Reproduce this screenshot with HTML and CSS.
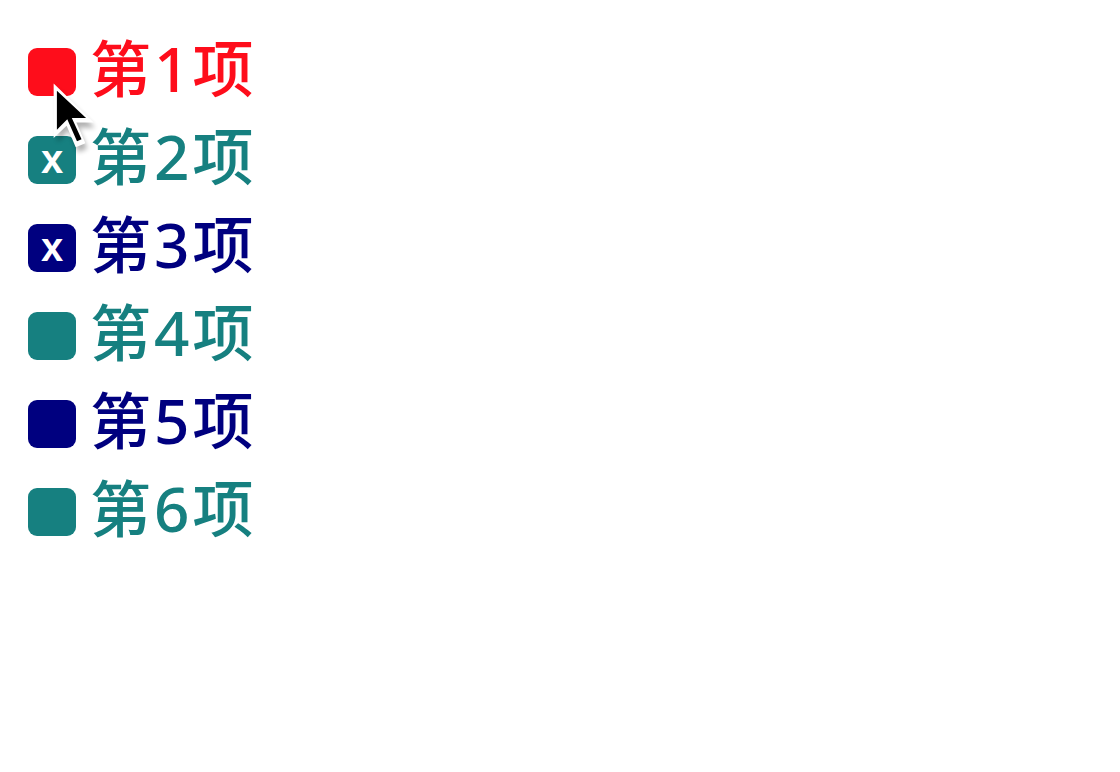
FILE: index.html
```html
<!DOCTYPE html>
<html>
<head>
<meta charset="utf-8">
<link rel="stylesheet" href="styles.css">
</head>
<body>
<ul class="list">
  <li class="item red"><span class="box"></span><span class="label">第<span class="num">1</span>项</span></li>
  <li class="item teal"><span class="box"><span class="mark">x</span></span><span class="label">第<span class="num">2</span>项</span></li>
  <li class="item navy"><span class="box"><span class="mark">x</span></span><span class="label">第<span class="num">3</span>项</span></li>
  <li class="item teal"><span class="box"></span><span class="label">第<span class="num">4</span>项</span></li>
  <li class="item navy"><span class="box"></span><span class="label">第<span class="num">5</span>项</span></li>
  <li class="item teal"><span class="box"></span><span class="label">第<span class="num">6</span>项</span></li>
</ul>
<svg class="cursor" width="52" height="83" viewBox="0 0 40 64">
  <defs>
    <filter id="sh" x="-50%" y="-50%" width="200%" height="200%">
      <feGaussianBlur stdDeviation="2"/>
    </filter>
  </defs>
  <path d="M3 4 L3 44 L12 35 L19 52 L26 49 L19 33 L32 33 Z" fill="#000" opacity="0.3" filter="url(#sh)" transform="translate(2,3)"/>
  <path d="M2 2 L2 44 L12 34.5 L19 51 L26.5 48 L19.5 32 L33 32 Z" fill="#fff"/>
  <path d="M4.5 7.5 L4.5 37.5 L12.5 29.5 L20 46.5 L23.5 45 L16 28.5 L27 28.5 Z" fill="#000"/>
</svg>
</body>
</html>
```
FILE: styles.css
```css
html, body {
  margin: 0;
  padding: 0;
  background: #fff;
}
body {
  position: relative;
  width: 1120px;
  height: 772px;
  overflow: hidden;
  font-family: "Noto Sans CJK SC", "Noto Sans", sans-serif;
}
.list {
  list-style: none;
  margin: 0;
  padding: 22px 0 0 28px;
  display: flex;
  flex-direction: column;
}
.item {
  display: flex;
  align-items: center;
  height: 88px;
  gap: 14px;
}
.box {
  width: 48px;
  height: 48px;
  border-radius: 9px;
  display: flex;
  align-items: center;
  justify-content: center;
  margin-top: 12px;
  flex: none;
}
.mark {
  color: #fff;
  font-family: "Liberation Sans", Arial, sans-serif;
  font-weight: bold;
  font-size: 40px;
  line-height: 1;
  margin-top: -2px;
}
.label {
  font-size: 61px;
  font-weight: 500;
  line-height: 1;
  margin-top: 2px;
}
.num {
  font-family: "Noto Sans", "Liberation Sans", sans-serif;
  font-weight: 500;
  font-size: 62px;
  padding: 0 3px 0 3px;
}
.red .box { background: #fe0d1b; }
.red .label { color: #fe0d1b; }
.teal .box { background: #168080; }
.teal .label { color: #168080; }
.navy .box { background: #00007f; }
.navy .label { color: #00007f; }
.cursor {
  position: absolute;
  left: 51px;
  top: 81px;
}
```
